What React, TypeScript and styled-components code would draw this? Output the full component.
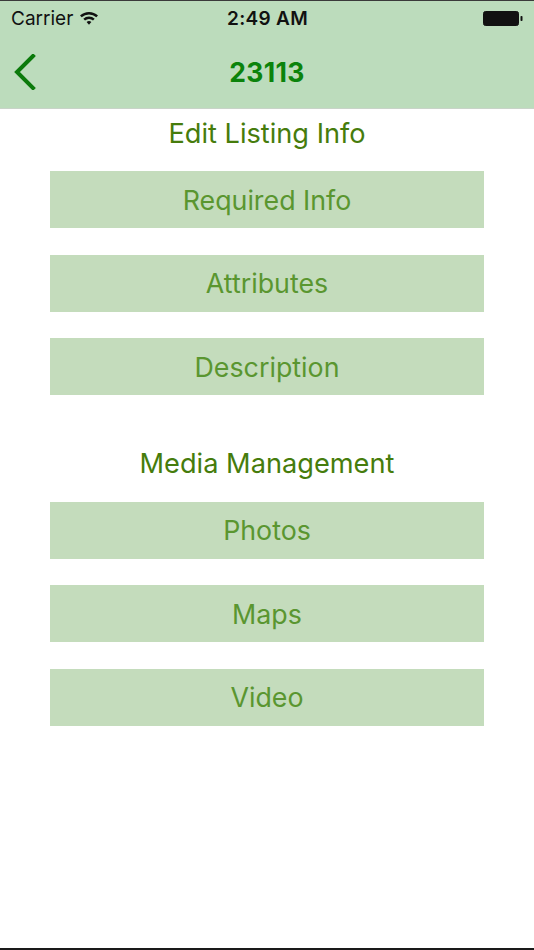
import React from "react";
import styled, { createGlobalStyle } from "styled-components";

const Global = createGlobalStyle`
  html, body { margin: 0; padding: 0; background: #ffffff; }
  * { box-sizing: border-box; }
`;

const Screen = styled.div`
  width: 534px;
  height: 950px;
  background: #ffffff;
  border-top: 1px solid #3a3a3a;
  border-bottom: 2px solid #1a1a1a;
  font-family: Inter, "Noto Sans", "Liberation Sans", sans-serif;
  display: flex;
  flex-direction: column;
  overflow: hidden;
`;

const Header = styled.header`
  background: #bcdcbc;
  height: 108px;
  border-bottom: 1px solid #c9d3c9;
  display: flex;
  flex-direction: column;
`;

const StatusBar = styled.div`
  height: 34px;
  display: grid;
  grid-template-columns: 1fr auto 1fr;
  align-items: center;
  padding: 0 10px 0 11px;
  color: #111;
  font-size: 19px;
`;

const StatusLeft = styled.div`
  display: flex;
  align-items: center;
  gap: 6px;
`;

const Time = styled.div`
  font-weight: 600;
  letter-spacing: 0.3px;
`;

const StatusRight = styled.div`
  display: flex;
  justify-content: flex-end;
  align-items: center;
`;

const NavBar = styled.div`
  flex: 1;
  display: grid;
  grid-template-columns: 60px 1fr 60px;
  align-items: center;
`;

const BackButton = styled.button`
  border: none;
  background: none;
  padding: 0 0 0 13px;
  height: 100%;
  display: flex;
  align-items: center;
  cursor: pointer;
`;

const NavTitle = styled.h1`
  margin: 0;
  text-align: center;
  font-size: 26.5px;
  font-weight: 700;
  color: #0b830b;
  letter-spacing: 0.3px;
`;

const Content = styled.main`
  display: flex;
  flex-direction: column;
  align-items: center;
  padding-top: 0.5px;
`;

const Section = styled.section<{ $top: number }>`
  width: 100%;
  display: flex;
  flex-direction: column;
  align-items: center;
  margin-top: ${(p) => p.$top}px;
`;

const SectionTitle = styled.h2`
  margin: 0 0 13.5px;
  height: 48px;
  line-height: 48px;
  font-size: 27.2px;
  font-weight: 400;
  color: #467c0c;
`;

const ButtonList = styled.div`
  display: flex;
  flex-direction: column;
  gap: 26.5px;
  width: 434px;
`;

const MenuButton = styled.button`
  height: 57px;
  width: 100%;
  border: none;
  background: #c4dcbc;
  color: #5a9630;
  font-family: inherit;
  font-size: 26.8px;
  font-weight: 400;
  cursor: pointer;
`;

const Wifi = () => (
  <svg width="20" height="16" viewBox="0 0 20 16">
    <path d="M1 5.5 A13 13 0 0 1 19 5.5 L17.3 7.3 A10.6 10.6 0 0 0 2.7 7.3 Z" fill="#111" />
    <path d="M4.3 8.8 A8.3 8.3 0 0 1 15.7 8.8 L14 10.6 A5.9 5.9 0 0 0 6 10.6 Z" fill="#111" />
    <path d="M7.6 12.1 A3.7 3.7 0 0 1 12.4 12.1 L10 14.8 Z" fill="#111" />
  </svg>
);

const Battery = () => (
  <svg width="42" height="17" viewBox="0 0 42 17">
    <rect x="1.5" y="1.5" width="35" height="14" rx="2" fill="#111" stroke="#111" strokeWidth="1" />
    <rect x="38.5" y="6" width="2" height="5" rx="0.8" fill="#111" />
  </svg>
);

const Chevron = () => (
  <svg width="24" height="36" viewBox="0 0 24 36">
    <path d="M20 2 L4 18 L20 34" fill="none" stroke="#0b7a0b" strokeWidth="4" strokeLinecap="square" />
  </svg>
);

const sections = [
  { title: "Edit Listing Info", items: ["Required Info", "Attributes", "Description"], top: 0 },
  { title: "Media Management", items: ["Photos", "Maps", "Video"], top: 45 },
];

export default function App() {
  return (
    <>
      <Global />
      <Screen>
        <Header>
          <StatusBar>
            <StatusLeft>
              <span>Carrier</span>
              <Wifi />
            </StatusLeft>
            <Time>2:49 AM</Time>
            <StatusRight>
              <Battery />
            </StatusRight>
          </StatusBar>
          <NavBar>
            <BackButton aria-label="Back">
              <Chevron />
            </BackButton>
            <NavTitle>23113</NavTitle>
            <div />
          </NavBar>
        </Header>
        <Content>
          {sections.map((s) => (
            <Section key={s.title} $top={s.top}>
              <SectionTitle>{s.title}</SectionTitle>
              <ButtonList>
                {s.items.map((i) => (
                  <MenuButton key={i}>{i}</MenuButton>
                ))}
              </ButtonList>
            </Section>
          ))}
        </Content>
      </Screen>
    </>
  );
}
